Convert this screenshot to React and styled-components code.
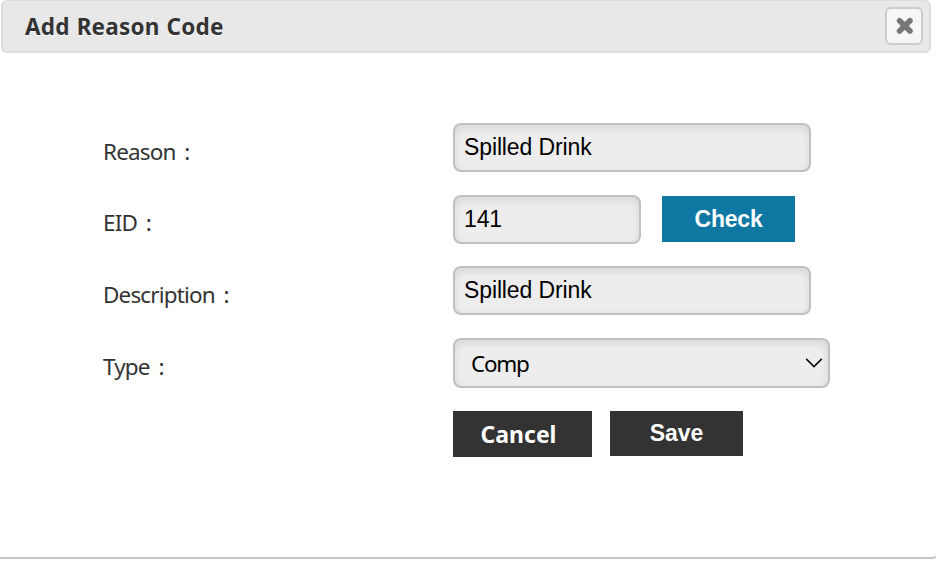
import React from "react";
import styled, { createGlobalStyle, css } from "styled-components";

function App() {
  return (
    <>
      <GlobalStyle />
      <Dialog>
        <Header>
          <Title>Add Reason Code</Title>
          <CloseButton type="button" aria-label="Close">
            <svg width="20" height="20" viewBox="0 0 20 20">
              <path
                d="M4.6 4.7L15 15.1M15 4.7L4.6 15.1"
                stroke="#777"
                strokeWidth="5.6"
                strokeLinecap="round"
                fill="none"
              />
            </svg>
          </CloseButton>
        </Header>
        <Form>
          <Row>
            <Label htmlFor="reason">Reason :</Label>
            <Input id="reason" $width={358} defaultValue="Spilled Drink" />
          </Row>
          <Row>
            <Label htmlFor="eid">EID :</Label>
            <Input id="eid" $width={188} defaultValue="141" />
            <CheckButton type="button">Check</CheckButton>
          </Row>
          <Row>
            <Label htmlFor="description">Description :</Label>
            <Input id="description" $width={358} defaultValue="Spilled Drink" />
          </Row>
          <Row>
            <Label htmlFor="type">Type :</Label>
            <SelectBox id="type" type="button">
              Comp
              <svg width="18" height="10" viewBox="0 0 18 10">
                <path
                  d="M1.2 0.9L9 8.5L16.8 0.9"
                  stroke="#111"
                  strokeWidth="1.7"
                  fill="none"
                />
              </svg>
            </SelectBox>
          </Row>
          <Actions>
            <CancelButton type="button">Cancel</CancelButton>
            <SaveButton type="button">Save</SaveButton>
          </Actions>
        </Form>
      </Dialog>
    </>
  );
}

const GlobalStyle = createGlobalStyle`
  * {
    box-sizing: border-box;
  }

  body {
    margin: 0;
    background: white;
    overflow: hidden;
    font-family: Tahoma, "Noto Sans", sans-serif;
  }
`;

const Dialog = styled.div`
  height: 559px;
  width: 937px;
  background: white;
  border-bottom: 2px solid #c5c5c5;
  border-bottom-right-radius: 5px;
  box-shadow: 0 2px 0 #eee;
`;

const Header = styled.div`
  display: flex;
  align-items: center;
  justify-content: space-between;
  height: 53px;
  width: 930px;
  margin-left: 1px;
  padding: 0 8px 1px 22px;
  background: #e8e8e8;
  border: 2px solid #dddddd;
  border-top-width: 1px;
  border-radius: 6px;
`;

const Title = styled.div`
  padding-top: 2px;
  color: #333;
  font-size: 22.5px;
  font-weight: 700;
  letter-spacing: 0.2px;
  word-spacing: 1px;
  line-height: 30px;
  text-shadow: 0 1px 0 white;
  white-space: nowrap;
`;

const CloseButton = styled.button`
  display: flex;
  align-items: center;
  justify-content: center;
  height: 38px;
  width: 38px;
  margin-right: -2px;
  padding: 1px 0 0 1px;
  background: #f6f6f6;
  border: 2px solid #ccc;
  border-radius: 6px;
`;

const Form = styled.div`
  padding: 70px 0 0 103px;
`;

const Row = styled.div`
  display: flex;
  align-items: flex-start;
  height: 71.7px;
`;

const Label = styled.label`
  flex: none;
  width: 350px;
  padding-top: 12.5px;
  color: #333;
  font-size: 22.5px;
  letter-spacing: -0.85px;
  word-spacing: 3.8px;
  line-height: 31px;
`;

const field = css`
  height: 49px;
  background: #ededed;
  border: 2px solid #c0c0c0;
  border-radius: 8px;
  box-shadow: inset 0 3px 8px rgba(0, 0, 0, 0.1);
  color: #000;
  font-size: 23px;
`;

const Input = styled.input`
  ${field}
  width: ${(props) => props.$width}px;
  padding: 0 9px;
  font-family: Arial, "Liberation Sans", sans-serif;
  letter-spacing: -0.12px;
  outline: none;
`;

const SelectBox = styled.button`
  ${field}
  display: flex;
  align-items: center;
  justify-content: space-between;
  height: 50px;
  width: 377px;
  padding: 0 5px 0 16px;
  font-family: inherit;
  font-size: 22.5px;
  letter-spacing: -1.3px;
`;

const Button = styled.button`
  border: none;
  background: #333;
  color: white;
  font-size: 23px;
  font-weight: 700;
`;

const CheckButton = styled(Button)`
  height: 46px;
  width: 133px;
  margin: 1.5px 0 0 21px;
  background: #0e78a3;
  font-family: Arial, "Liberation Sans", sans-serif;
  letter-spacing: -0.2px;
`;

const Actions = styled.div`
  display: flex;
  align-items: flex-start;
  gap: 18px;
  margin: 1px 0 0 350px;
`;

const CancelButton = styled(Button)`
  height: 46px;
  width: 139px;
  padding: 1px 8px 0 0;
  font-family: inherit;
`;

const SaveButton = styled(Button)`
  height: 45px;
  width: 133px;
  font-family: Arial, "Liberation Sans", sans-serif;
`;

export default App;
